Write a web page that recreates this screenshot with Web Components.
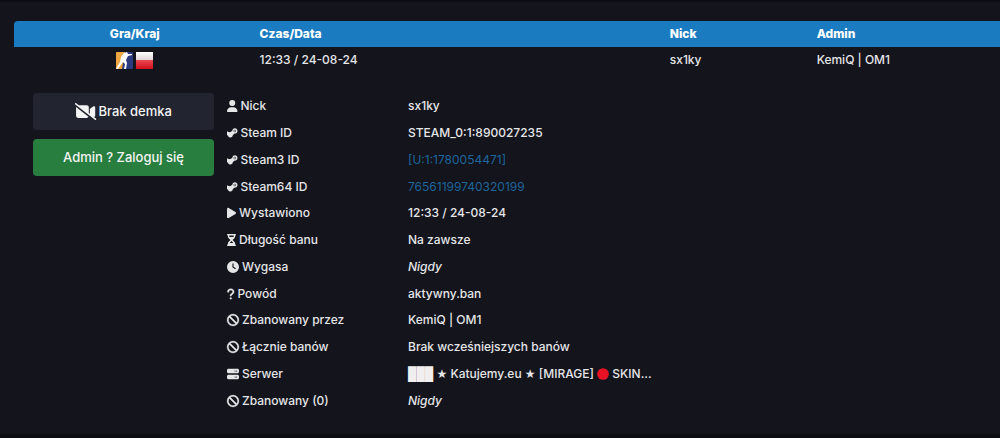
<!DOCTYPE html>
<html lang="pl">
<head>
<meta charset="utf-8">
<meta name="viewport" content="width=device-width, initial-scale=1">
<title>Lista banów</title>
<style>
  html, body { margin: 0; }
  body {
    min-height: 100vh;
    display: flex;
    flex-direction: column;
    background: #0d0e14;
    color: #e6e6e8;
    font: 500 12px/18px Inter, "Noto Sans", sans-serif;
  }
  ban-panel { flex: 1; }
</style>
</head>
<body>
<ban-panel>
  <ban-table></ban-table>
  <ban-entry>
    <ban-button slot="actions"><ban-icon name="video-slash"></ban-icon> Brak demka</ban-button>
    <ban-button slot="actions" kind="success">Admin ? Zaloguj się</ban-button>
    <ban-details></ban-details>
  </ban-entry>
</ban-panel>

<script>
const ICONS = {
  user: [448, 512, '<path d="M224 256A128 128 0 1 0 224 0a128 128 0 1 0 0 256zm-45.700 48C79.800 304 0 383.800 0 482.300 0 498.700 13.300 512 29.700 512h388.600c16.400 0 29.700-13.300 29.700-29.700C448 383.800 368.200 304 269.700 304z"/>'],
  steam: [448, 512, '<path fill-rule="evenodd" d="M0 205c0-14 14-14 28-8l64 32c18-12 42-16 66-12l74-68C238 92 282 56 336 56c62 0 112 50 112 112 0 64-50 112-114 112l-84 60c0 66-50 108-104 108-50 0-92-32-104-78L0 340zM336 112a56 56 0 1 0 0 112 56 56 0 1 0 0-112z"/><circle cx="336" cy="168" r="44" opacity=".75"/>'],
  play: [384, 512, '<path d="M73 39c-14.800-9.100-33.400-9.400-48.500-.9S0 62.600 0 80v352c0 17.400 9.400 33.400 24.500 41.900s33.700 8.100 48.500-.9l288-176c14.300-8.700 23-24.200 23-41s-8.700-32.200-23-41z"/>'],
  hourglass: [384, 512, '<path fill-rule="evenodd" d="M32 0a32 32 0 0 0 0 64v11c0 42.400 16.900 83.100 46.900 113.100l67.900 67.900-67.900 67.900C48.900 353.900 32 394.600 32 437v11a32 32 0 0 0 0 64h320a32 32 0 0 0 0-64v-11c0-42.400-16.900-83.100-46.900-113.100L237.200 256l67.900-67.900C335.100 158.100 352 117.400 352 75V64a32 32 0 0 0 0-64zm64 75V64h192v11c0 19-5.600 37.400-16 53H112c-10.300-15.600-16-34-16-53zm16 309c3.500-5.300 7.600-10.300 12.100-14.900l67.900-67.800 67.900 67.900c4.600 4.600 8.600 9.600 12.200 14.900z"/>'],
  clock: [512, 512, '<path fill-rule="evenodd" d="M256 0a256 256 0 1 1 0 512 256 256 0 1 1 0-512zm-24 120v136c0 8 4 15.500 10.700 20l96 64c11 7.400 25.900 4.400 33.300-6.700s4.400-25.900-6.700-33.300L280 243.200V120c0-13.300-10.700-24-24-24s-24 10.700-24 24z"/>'],
  question: [320, 512, '<path stroke="currentColor" stroke-width="14" d="M80 160c0-35.300 28.700-64 64-64h32c35.300 0 64 28.700 64 64v3.600c0 21.800-11.100 42.100-29.400 53.800l-42.200 27.100c-25.200 16.200-40.400 44.100-40.400 74v1.500a32 32 0 0 0 64 0v-1.400c0-8.200 4.200-15.800 11-20.200l42.200-27.100c36.600-23.600 58.800-64.100 58.800-107.700V160c0-70.700-57.300-128-128-128h-32C73.300 32 16 89.300 16 160a32 32 0 0 0 64 0zm80 320a40 40 0 1 0 0-80 40 40 0 1 0 0 80z"/>'],
  ban: [512, 512, '<path fill-rule="evenodd" stroke="currentColor" stroke-width="12" d="M367.200 412.500 99.500 144.800C77.100 176.100 64 214.500 64 256c0 106 86 192 192 192 41.500 0 79.900-13.100 111.200-35.500zm45.300-45.300C434.900 335.900 448 297.500 448 256c0-106-86-192-192-192-41.500 0-79.900 13.100-111.200 35.500zM0 256a256 256 0 1 1 512 0 256 256 0 1 1-512 0z"/>'],
  server: [512, 512, '<path fill-rule="evenodd" d="M64 32C28.700 32 0 60.700 0 96v64c0 35.300 28.700 64 64 64h384c35.300 0 64-28.700 64-64V96c0-35.300-28.700-64-64-64zm280 72a24 24 0 1 1 0 48 24 24 0 1 1 0-48zm64 0a24 24 0 1 1 0 48 24 24 0 1 1 0-48zM64 288c-35.300 0-64 28.700-64 64v64c0 35.300 28.700 64 64 64h384c35.300 0 64-28.700 64-64v-64c0-35.300-28.700-64-64-64zm280 72a24 24 0 1 1 0 48 24 24 0 1 1 0-48zm64 0a24 24 0 1 1 0 48 24 24 0 1 1 0-48z"/>'],
  'video-slash': [640, 512, '<path d="M38.800 5.100C28.400-3.100 13.300-1.200 5.100 9.200S-1.200 34.700 9.200 42.900l592 464c10.400 8.200 25.500 6.300 33.700-4.100s6.300-25.500-4.100-33.700l-86.400-67.700 13.800 9.200c9.800 6.500 22.400 7.200 32.900 1.600S608 395.800 608 384V128c0-11.800-6.500-22.600-16.900-28.200s-23-5-32.900 1.600l-96 64-14.200 9.500v149.600l-32-25.100V128c0-35.300-28.700-64-64-64H113.900zM407 416.700 32.300 121.500c-.2 2.100-.3 4.300-.3 6.500v256c0 35.300 28.700 64 64 64h256c23.400 0 43.900-12.600 55-31.300z"/>'],
  dot: [512, 512, '<circle cx="256" cy="256" r="250"/>']
};

class BanIcon extends HTMLElement {
  connectedCallback() {
    const [w, h, body] = ICONS[this.getAttribute('name')];
    this.attachShadow({ mode: 'open' }).innerHTML = `
      <style>
        :host { display: inline-block; line-height: 0; }
        svg { display: block; height: var(--icon-size, 12px); fill: currentColor; overflow: visible; }
      </style>
      <svg viewBox="0 0 ${w} ${h}" aria-hidden="true">${body}</svg>`;
  }
}

class BanPanel extends HTMLElement {
  constructor() {
    super();
    this.attachShadow({ mode: 'open' }).innerHTML = `
      <style>
        :host {
          display: block;
          padding: 19px 0 8px 14px;
          background: #13141c;
          border: solid #0d0e14;
          border-width: 2px 0 4px;
        }
      </style>
      <slot></slot>`;
  }
}

class BanTable extends HTMLElement {
  constructor() {
    super();
    this.attachShadow({ mode: 'open' }).innerHTML = `
      <style>
        :host { display: block; }
        table { width: 100%; border-spacing: 0; table-layout: fixed; }
        th, td { box-sizing: border-box; padding: 4px; text-align: left; line-height: 18px; }
        th { background: #1b7bc1; color: #fff; font-weight: 800; }
        th:first-child { border-top-left-radius: 4px; }
        .game { width: 24.5%; text-align: center; }
        .date { width: 41.6%; }
        .nick { width: 14.9%; }
        .flags { display: flex; justify-content: center; gap: 3px; }
        .flags svg { display: block; width: 17px; height: 17px; }
      </style>
      <table>
        <thead>
          <tr><th class="game">Gra/Kraj</th><th class="date">Czas/Data</th><th class="nick">Nick</th><th>Admin</th></tr>
        </thead>
        <tbody>
          <tr>
            <td class="game"><div class="flags">
              <svg viewBox="0 0 17 17" role="img" aria-label="Counter-Strike 2">
                <rect width="17" height="17" rx="1" fill="#2b3a7c"/>
                <path d="M1 0h8L6 17H1Q0 17 0 16V1Q0 0 1 0z" fill="#eda640"/>
                <path d="M8 1l3-1 1 2 4 0v1l-4 1-1 2-1 2 1 3-1 6H8l1-5-2-2-3 4-2 3H0l4-7 1-5 2-3z" fill="#fff"/>
              </svg>
              <svg viewBox="0 0 17 17" role="img" aria-label="Polska">
                <defs>
                  <linearGradient id="flag" x1="0" x2="0" y1="0" y2="1">
                    <stop stop-color="#fff"/><stop offset=".45" stop-color="#e2d8d8"/>
                    <stop offset=".5" stop-color="#e8464e"/><stop offset="1" stop-color="#cf0f1c"/>
                  </linearGradient>
                </defs>
                <rect width="17" height="17" fill="url(#flag)"/>
              </svg>
            </div></td>
            <td>12:33 / 24-08-24</td><td>sx1ky</td><td>KemiQ | OM1</td>
          </tr>
        </tbody>
      </table>`;
  }
}

class BanEntry extends HTMLElement {
  constructor() {
    super();
    this.attachShadow({ mode: 'open' }).innerHTML = `
      <style>
        :host { display: flex; gap: 13px; padding: 20px 0 0 19px; align-items: flex-start; }
        .actions { flex: 0 0 181px; display: grid; gap: 9px; }
        .body { flex: 1; min-width: 0; }
      </style>
      <div class="actions"><slot name="actions"></slot></div>
      <div class="body"><slot></slot></div>`;
  }
}

class BanButton extends HTMLElement {
  constructor() {
    super();
    this.attachShadow({ mode: 'open' }).innerHTML = `
      <style>
        :host { display: block; --icon-size: 17px; }
        button {
          display: flex; align-items: center; justify-content: center; gap: 2px;
          width: 100%; padding: 8px; border: 0; border-radius: 4px;
          background: #222430; color: #f4f4f4;
          font: 500 13px/21px Inter, "Noto Sans", sans-serif; cursor: pointer;
        }
        :host([kind="success"]) button { background: #277e3e; }
      </style>
      <button type="button"><slot></slot></button>`;
  }
}

const DETAILS = [
  ['user', 'Nick', 'sx1ky'],
  ['steam', 'Steam ID', 'STEAM_0:1:890027235'],
  ['steam', 'Steam3 ID', '<a href="#steam3">[U:1:1780054471]</a>'],
  ['steam', 'Steam64 ID', '<a href="#steam64">76561199740320199</a>'],
  ['play', 'Wystawiono', '12:33 / 24-08-24'],
  ['hourglass', 'Długość banu', 'Na zawsze'],
  ['clock', 'Wygasa', '<i>Nigdy</i>'],
  ['question', 'Powód', 'aktywny.ban'],
  ['ban', 'Zbanowany przez', 'KemiQ | OM1'],
  ['ban', 'Łącznie banów', 'Brak wcześniejszych banów'],
  ['server', 'Serwer', '<span class="block">███</span> <span class="star">★</span> Katujemy.eu <span class="star">★</span> [MIRAGE] <ban-icon class="dot" name="dot"></ban-icon> SKIN...'],
  ['ban', 'Zbanowany (0)', '<i>Nigdy</i>']
];

class BanDetails extends HTMLElement {
  constructor() {
    super();
    this.attachShadow({ mode: 'open' }).innerHTML = `
      <style>
        :host { display: block; }
        dl { display: grid; grid-auto-rows: 1fr; min-height: 321px; margin: 0; }
        .row { display: grid; grid-template-columns: 181px 1fr; align-items: center; }
        dt { display: flex; align-items: center; gap: 3px; }
        dd { margin: 0; white-space: nowrap; }
        a { color: #1d659b; font-weight: 400; text-decoration: none; }
        .block { font: 14px/14px "Liberation Mono", monospace; color: #f0eeee; }
        .star { font: 12px/12px "DejaVu Sans", sans-serif; }
        .dot { color: #e81224; vertical-align: -2px; }
      </style>
      <dl>${DETAILS.map(([icon, label, value]) => `
        <div class="row"><dt><ban-icon name="${icon}"></ban-icon>${label}</dt><dd>${value}</dd></div>`).join('')}
      </dl>`;
  }
}

customElements.define('ban-icon', BanIcon);
customElements.define('ban-panel', BanPanel);
customElements.define('ban-table', BanTable);
customElements.define('ban-entry', BanEntry);
customElements.define('ban-button', BanButton);
customElements.define('ban-details', BanDetails);
</script>
</body>
</html>
